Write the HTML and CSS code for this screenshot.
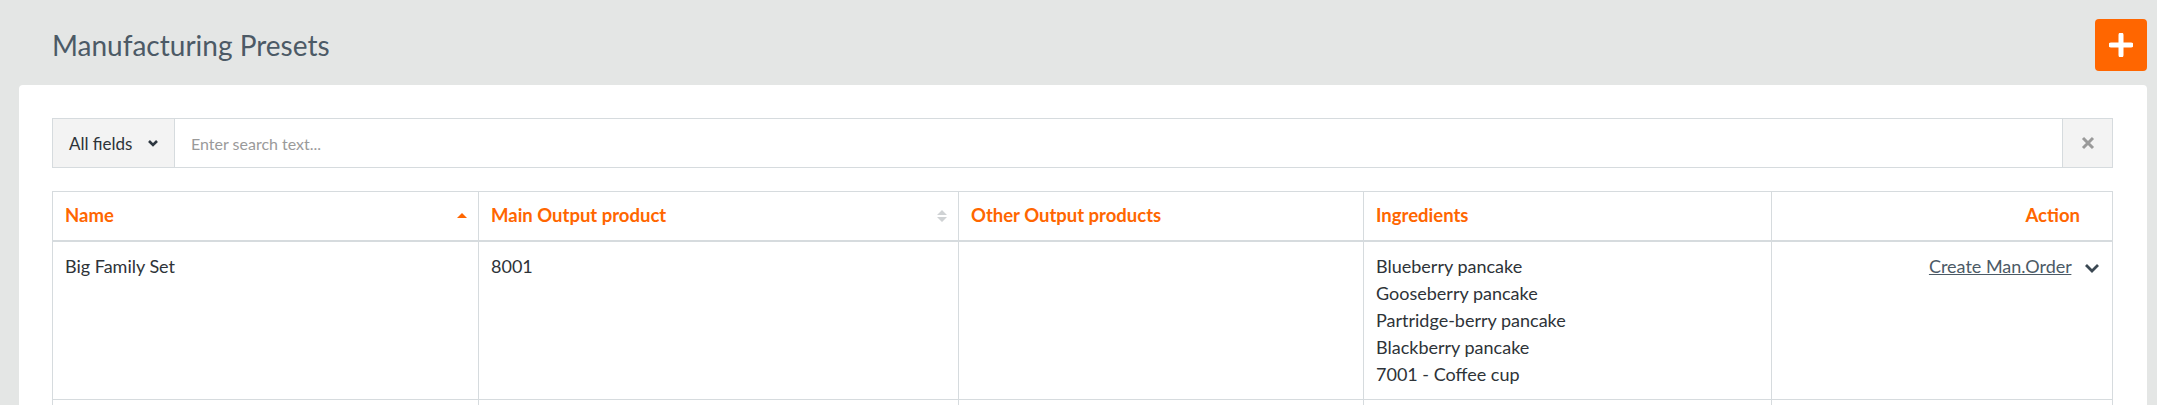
FILE: index.html
```html
<!DOCTYPE html>
<html lang="en">
<head>
    <title>Manufacturing Presets</title>
    <link rel="stylesheet" href="styles.css">
</head>
<body>
    <div class="page">
        <div class="page-header">
            <h1>Manufacturing Presets</h1>
            <button class="add-btn" title="Add preset">
                <svg width="24" height="24" viewBox="0 0 24 24"><path d="M12 2v20M2 12h20" stroke="#fff" stroke-width="5" stroke-linecap="round"/></svg>
            </button>
        </div>

        <div class="card">
            <div class="search-bar">
                <div class="field-select">
                    All fields
                    <svg width="12" height="10" viewBox="0 0 12 10"><path d="M2 3l4 4 4-4" fill="none" stroke="#2e3740" stroke-width="2.6"/></svg>
                </div>
                <input class="search-input" placeholder="Enter search text..." />
                <button class="clear-btn">
                    <svg width="14" height="14" viewBox="0 0 14 14"><path d="M2 2l10 10M12 2L2 12" stroke="#9a9a9a" stroke-width="3"/></svg>
                </button>
            </div>

            <table class="presets">
                <colgroup>
                    <col class="col-name">
                    <col class="col-main">
                    <col class="col-other">
                    <col class="col-ingr">
                    <col class="col-action">
                </colgroup>
                <thead>
                    <tr>
                        <th>
                            <div class="th-inner">Name
                                <svg class="sort" width="12" height="14" viewBox="0 0 12 14"><path d="M1 9l5-5 5 5z" fill="#ff6600"/></svg>
                            </div>
                        </th>
                        <th>
                            <div class="th-inner">Main Output product
                                <svg class="sort" width="12" height="16" viewBox="0 0 12 16"><path d="M1 7l5-5 5 5z M1 9l5 5 5-5z" fill="#cfd2d4"/></svg>
                            </div>
                        </th>
                        <th>Other Output products</th>
                        <th>Ingredients</th>
                        <th class="action-head">Action</th>
                    </tr>
                </thead>
                <tbody>
                    <tr>
                        <td>Big Family Set</td>
                        <td>8001</td>
                        <td></td>
                        <td>
                            Blueberry pancake<br>
                            Gooseberry pancake<br>
                            Partridge-berry pancake<br>
                            Blackberry pancake<br>
                            7001 - Coffee cup
                        </td>
                        <td class="action-cell">
                            <a href="#">Create Man.Order</a>
                            <svg width="16" height="12" viewBox="0 0 16 12"><path d="M2 3l6 6 6-6" fill="none" stroke="#3b4853" stroke-width="2.8"/></svg>
                        </td>
                    </tr>
                    <tr class="empty-row">
                        <td></td>
                        <td></td>
                        <td></td>
                        <td></td>
                        <td></td>
                    </tr>
                </tbody>
            </table>
        </div>
    </div>
</body>
</html>
```

FILE: styles.css
```css
body {
    margin: 0;
    background-color: #e4e6e5;
    font-family: "Source Sans Pro", Lato, "Noto Sans", sans-serif;
    color: #2e3338;
    overflow: hidden;
}
.page {
    padding: 0 10px 0 19px;
}
.page-header {
    display: flex;
    justify-content: space-between;
    align-items: center;
    padding: 19px 0 14px 33px;
}
h1 {
    margin: 0;
    font-size: 28px;
    font-weight: 400;
    color: #4c5a66;
}
.add-btn {
    width: 52px;
    height: 52px;
    border: none;
    border-radius: 4px;
    background-color: #ff6600;
    display: flex;
    align-items: center;
    justify-content: center;
    cursor: pointer;
}
.card {
    background-color: #fff;
    border-radius: 4px 4px 0 0;
    padding: 33px 34px 33px 33px;
    min-height: 400px;
}
.search-bar {
    display: flex;
    height: 50px;
    border: 1px solid #d6dbde;
    box-sizing: border-box;
}
.field-select {
    display: flex;
    align-items: center;
    justify-content: space-between;
    padding: 0 15px 0 16px;
    width: 122px;
    box-sizing: border-box;
    white-space: nowrap;
    background-color: #f3f3f3;
    border-right: 1px solid #d6dbde;
    font-size: 17px;
    color: #2e3338;
}
.search-input {
    flex: 1;
    border: none;
    outline: none;
    padding: 0 16px;
    font-family: inherit;
    font-size: 16px;
}
.search-input::placeholder {
    color: #9a9a9a;
}
.clear-btn {
    width: 50px;
    border: none;
    border-left: 1px solid #d6dbde;
    background-color: #f3f3f3;
    display: flex;
    align-items: center;
    justify-content: center;
}
.presets {
    width: 100%;
    margin-top: 23px;
    border-collapse: collapse;
    table-layout: fixed;
    font-size: 18px;
}
.col-name { width: 426px; }
.col-main { width: 480px; }
.col-other { width: 405px; }
.col-ingr { width: 408px; }
.presets th, .presets td {
    border: 1px solid #d6dbde;
    padding: 11px 12px;
    line-height: 27px;
    text-align: left;
    vertical-align: top;
}
.presets th {
    color: #ff6600;
    font-weight: 700;
    font-size: 18.5px;
    border-bottom-width: 2px;
    padding-top: 10px;
}
.th-inner {
    display: flex;
    justify-content: space-between;
    align-items: center;
}
.sort {
    margin-right: -2px;
}
.action-head {
    text-align: right !important;
    padding-right: 32px !important;
}
.action-cell {
    text-align: right !important;
    padding-right: 12px !important;
}
.action-cell a {
    color: #4c5a66;
    text-decoration: underline;
}
.action-cell svg {
    margin-left: 8px;
    vertical-align: middle;
}
.empty-row td {
    height: 60px;
}
```
